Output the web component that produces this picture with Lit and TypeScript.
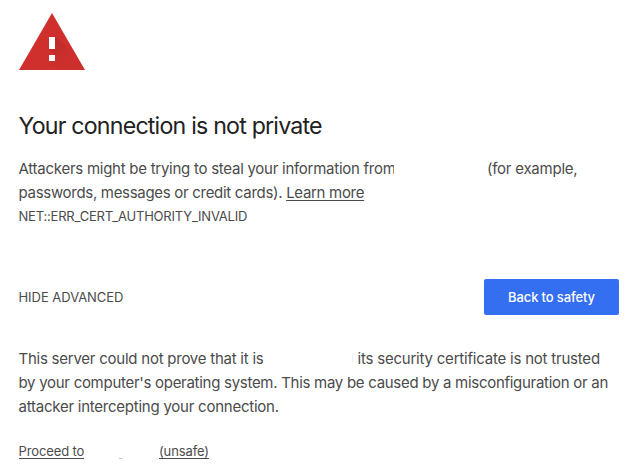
import { LitElement, html, css } from "lit";
import { customElement } from "lit/decorators.js";

@customElement("app-root")
export class AppRoot extends LitElement {
  static styles = css`
    :host {
      display: block;
      box-sizing: border-box;
      width: 630px;
      height: 469px;
      padding: 13px 11px 0 18.5px;
      overflow: hidden;
      background: #fff;
      color: #4b4b4b;
      font-family: Inter, "Liberation Sans", sans-serif;
      font-size: 15px;
      line-height: 24px;
      letter-spacing: -0.24px;
      white-space: nowrap;
    }
    .icon { display: block; width: 66px; height: 57px; margin-left: 0.5px; }
    h1 {
      margin: 42px 0 16px;
      color: #212121;
      font-size: 23.2px;
      font-weight: 400;
      line-height: 29px;
      letter-spacing: -0.8px;
    }
    .line { display: flex; height: 24px; }
    .cut { flex: none; overflow: hidden; }
    .start { width: 375.5px; margin-right: 93px; letter-spacing: -0.26px; }
    .warn { letter-spacing: -0.3px; }
    .proof { flex: none; width: 333.5px; }
    .speck { flex: none; width: 1px; height: 6px; margin: 9px 4.5px 0 0; background: #e3f1fa; }
    .trust { letter-spacing: -0.21px; }
    .cause { letter-spacing: -0.285px; }
    .code { height: 22px; font-size: 13px; line-height: 22px; letter-spacing: -0.2px; }
    a { color: inherit; text-decoration: underline; text-underline-offset: 2px; }
    .actions {
      display: flex;
      align-items: center;
      justify-content: space-between;
      height: 36px;
      margin: 52px 0 32px;
      font-size: 13px;
    }
    .toggle { line-height: 20px; letter-spacing: -0.04px; }
    button {
      width: 135px;
      height: 36px;
      padding: 0;
      border: 0;
      border-radius: 2px;
      background: #346ef1;
      color: #fff;
      font: 500 13px/20px Inter, "Liberation Sans", sans-serif;
      letter-spacing: -0.12px;
    }
    .proceed { height: 20px; margin-top: 22px; font-size: 13px; line-height: 20px; letter-spacing: -0.12px; }
    .to { width: 65.5px; }
    .tail { flex: none; width: 3px; height: 1px; margin: 17px 37px 0 35px; background: #c4c4c4; }
  `;

  render() {
    return html`
      <svg class="icon" viewBox="0 0 66 57" aria-hidden="true">
        <defs>
          <linearGradient id="shade" x1="34" y1="26" x2="52" y2="44" gradientUnits="userSpaceOnUse">
            <stop offset="0" stop-color="#000" stop-opacity=".12" />
            <stop offset=".7" stop-color="#000" stop-opacity=".03" />
            <stop offset="1" stop-color="#000" stop-opacity=".02" />
          </linearGradient>
        </defs>
        <path fill="#d0302d" d="M33 0 66 57H0Z" />
        <path fill="url(#shade)" d="M36 24 56 40 66 57H39L30 48 36 42 30 36Z" />
        <path fill="#fff" d="M30 24h6v12h-6zM30 42h6v6h-6z" />
      </svg>
      <h1>Your connection is not private</h1>
      <div class="line"><span class="cut start">Attackers might be trying to steal your information from</span><span>(for example,</span></div>
      <div class="line warn"><span>passwords, messages or credit cards).&nbsp;</span><a>Learn more</a></div>
      <div class="code">NET::ERR_CERT_AUTHORITY_INVALID</div>
      <div class="actions"><span class="toggle">HIDE ADVANCED</span><button>Back to safety</button></div>
      <div class="line"><span class="proof">This server could not prove that it is</span><i class="speck"></i><span class="trust">its security certificate is not trusted</span></div>
      <div class="line cause"><span>by your computer's operating system. This may be caused by a misconfiguration or an</span></div>
      <div class="line"><span>attacker intercepting your connection.</span></div>
      <div class="line proceed"><a class="cut to">Proceed to</a><i class="tail"></i><a>(unsafe)</a></div>
    `;
  }
}
